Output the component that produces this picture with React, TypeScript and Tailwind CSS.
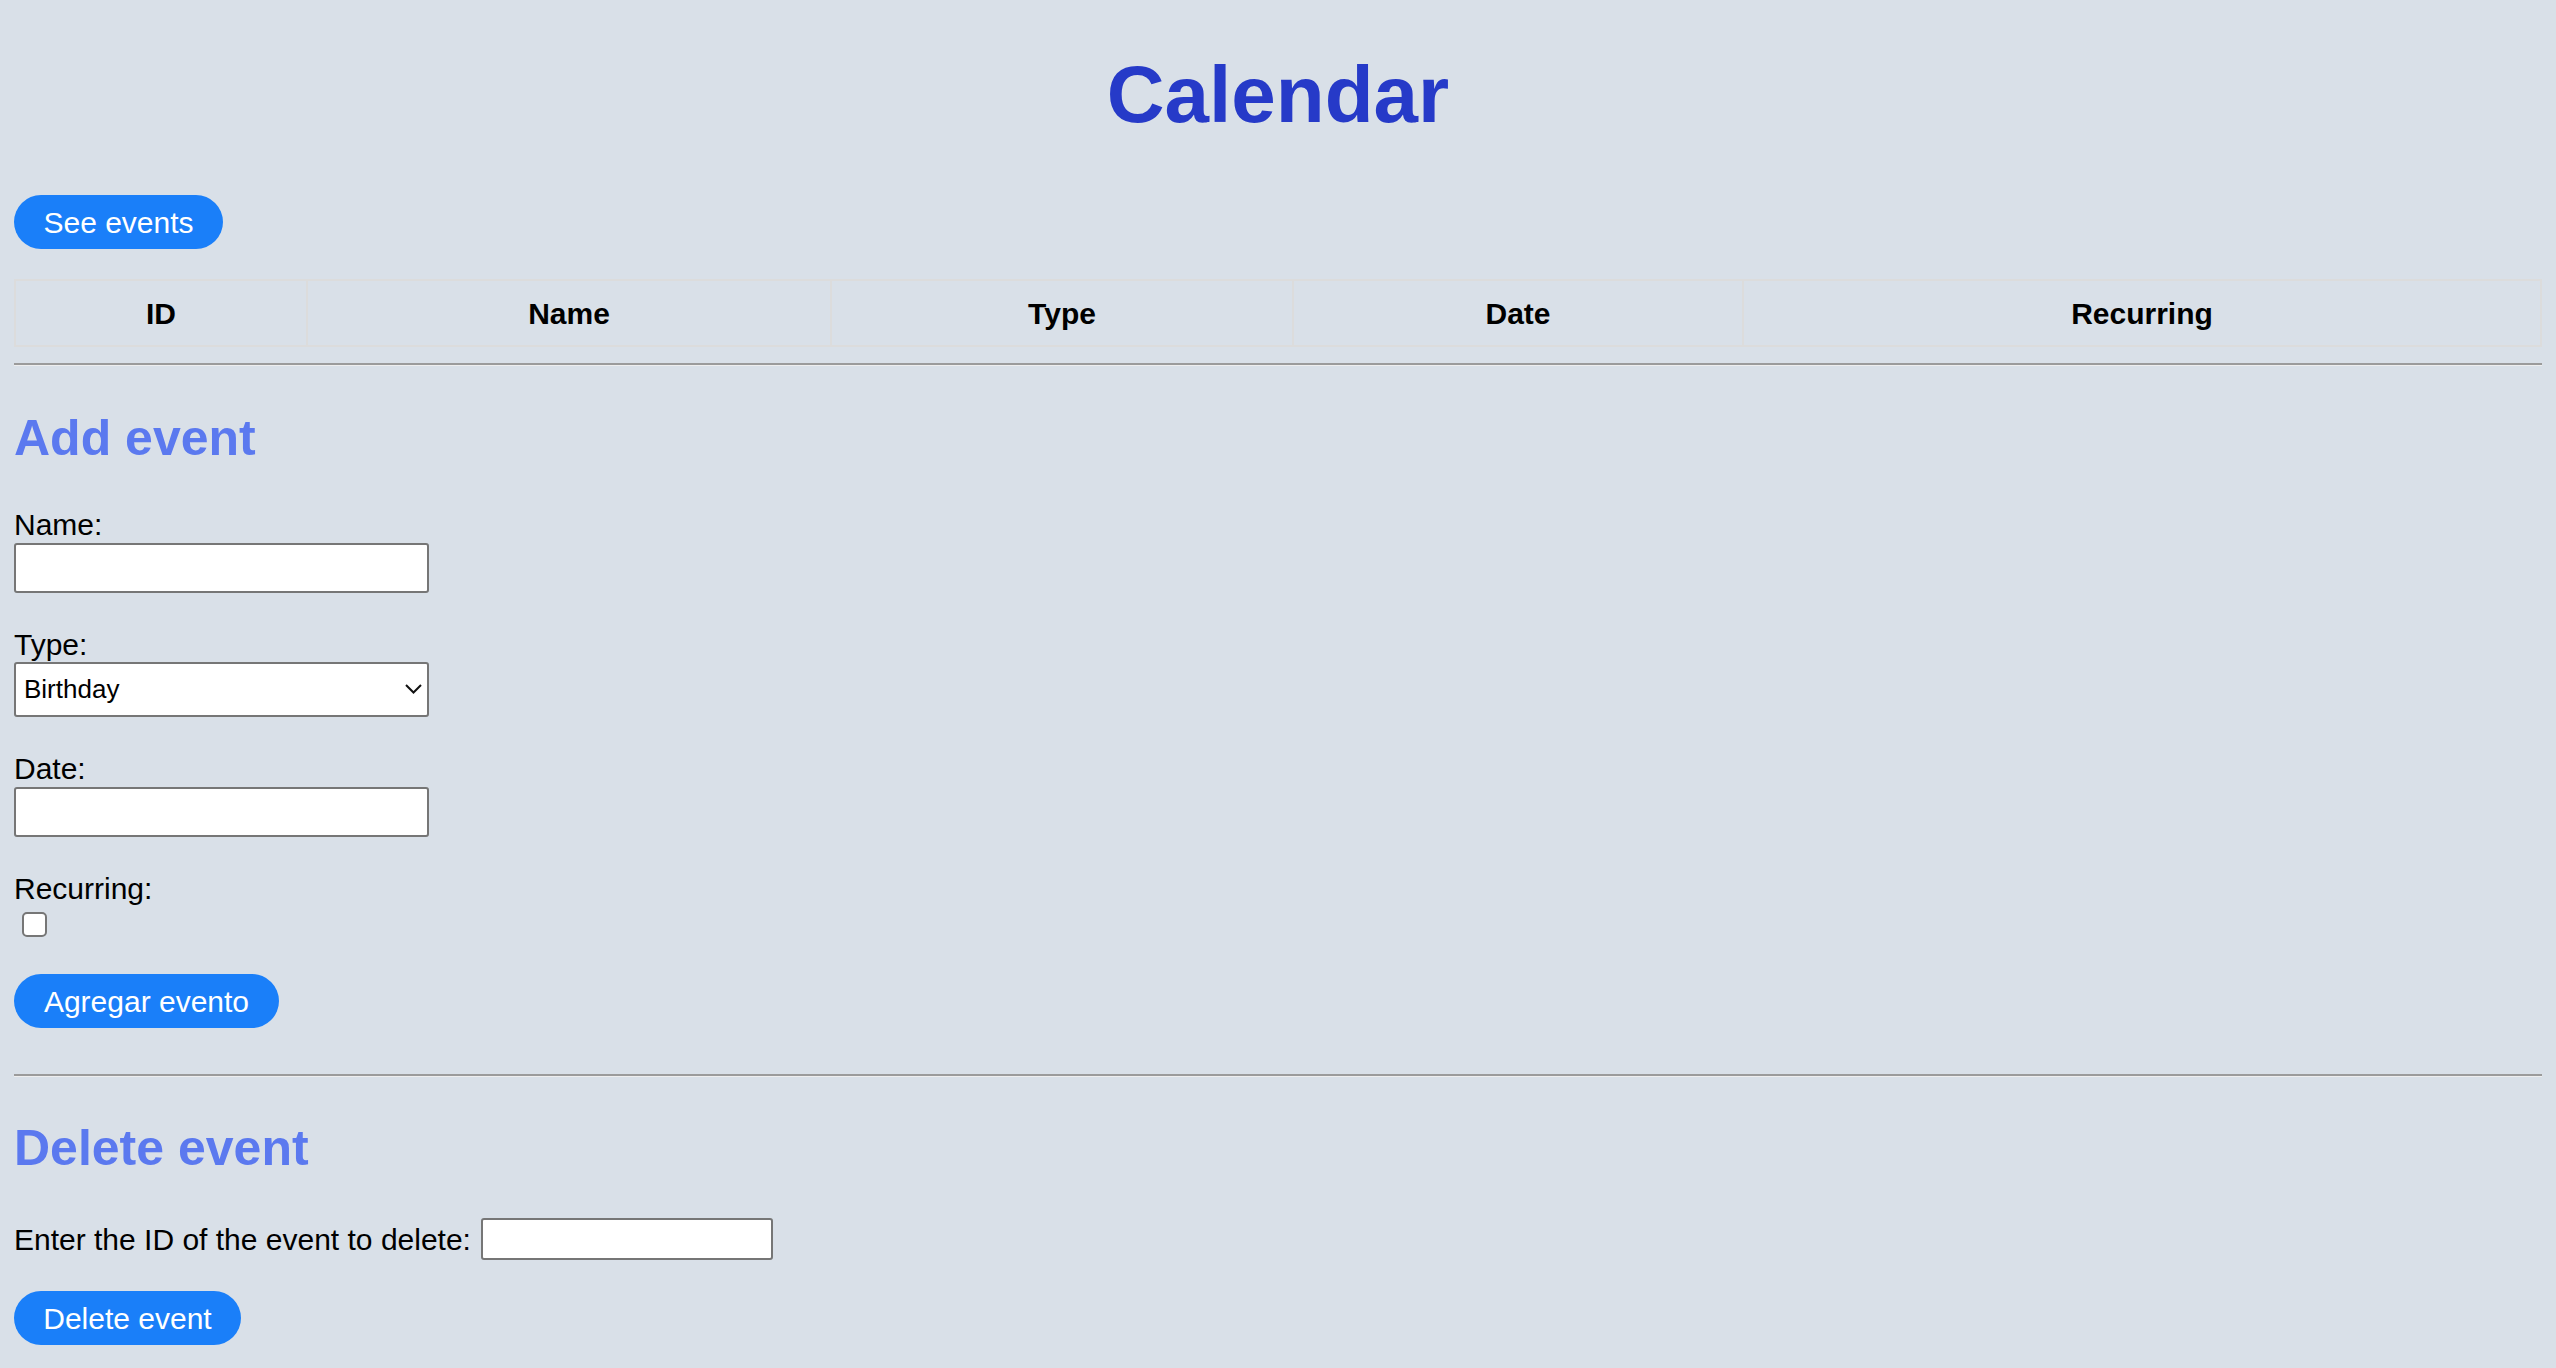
import React from "react";

function Btn({ children, w }: { children: React.ReactNode; w: string }) {
  return (
    <button
      className={`flex h-[54px] items-center justify-center rounded-full bg-[#1a7ff9] text-[30px] leading-[35px] text-white ${w}`}
    >
      {children}
    </button>
  );
}

function Label({ children, mt }: { children: React.ReactNode; mt: string }) {
  return <div className={`text-[30px] leading-[35px] text-black ${mt}`}>{children}</div>;
}

export default function App() {
  const cols = [
    { name: "ID", w: "w-[292px]" },
    { name: "Name", w: "w-[524px]" },
    { name: "Type", w: "w-[462px]" },
    { name: "Date", w: "w-[450px]" },
    { name: "Recurring", w: "" },
  ];
  return (
    <div className="min-h-[1368px] bg-[#d9e0e8] px-[14px] pt-[49px] pb-[23px] font-['Liberation_Sans',Arial,sans-serif] text-black">
      <h1 className="text-center text-[80px] font-bold leading-[92px] text-[#263ac8]">Calendar</h1>

      <div className="mt-[54px]">
        <Btn w="w-[209px]">See events</Btn>
      </div>

      <table className="mt-[30px] w-full border-collapse">
        <thead>
          <tr className="h-[66px]">
            {cols.map((c) => (
              <th
                key={c.name}
                className={`border-2 border-[#dcdcdc] p-0 text-center align-middle text-[30px] font-bold leading-[35px] ${c.w}`}
              >
                {c.name}
              </th>
            ))}
          </tr>
        </thead>
      </table>

      <div className="mt-[16px] h-[3px] border-t-2 border-b border-t-[#9b9b9b] border-b-[#eeeeee]" />

      <h2 className="mt-[43px] text-[50px] font-bold leading-[58px] text-[#5b79ef]">Add event</h2>

      <Label mt="mt-[40px]">Name:</Label>
      <input
        type="text"
        className="mt-[1px] block h-[50px] w-[415px] rounded-[3px] border-2 border-[#767676] bg-white"
      />

      <Label mt="mt-[34px]">Type:</Label>
      <div className="relative w-[415px]">
        <select className="block h-[55px] w-[415px] appearance-none rounded-[3px] border-2 border-[#767676] bg-white pl-[8px] text-[26px] text-black">
          <option>Birthday</option>
        </select>
        <svg
          className="pointer-events-none absolute left-[391px] top-[22px]"
          width="17"
          height="10"
          viewBox="0 0 17 10"
        >
          <path d="M1 1 L8.5 8.5 L16 1" fill="none" stroke="#111" strokeWidth="2" />
        </svg>
      </div>

      <Label mt="mt-[34px]">Date:</Label>
      <input
        type="text"
        className="mt-[1px] block h-[50px] w-[415px] rounded-[3px] border-2 border-[#767676] bg-white"
      />

      <Label mt="mt-[34px]">Recurring:</Label>
      <input
        type="checkbox"
        className="ml-[8px] mt-[6px] block h-[25px] w-[25px] appearance-none rounded-[5px] border-[2.5px] border-[#767676] bg-white"
      />

      <div className="mt-[37px]">
        <Btn w="w-[265px]">Agregar evento</Btn>
      </div>

      <div className="mt-[46px] h-[3px] border-t-2 border-b border-t-[#9b9b9b] border-b-[#eeeeee]" />

      <h2 className="mt-[42px] text-[50px] font-bold leading-[58px] text-[#5b79ef]">Delete event</h2>

      <div className="mt-[41px] flex h-[42px] items-center gap-[10px]">
        <span className="text-[30px] leading-[35px]">Enter the ID of the event to delete:</span>
        <input
          type="text"
          className="block h-[42px] w-[292px] rounded-[3px] border-2 border-[#767676] bg-white"
        />
      </div>

      <div className="mt-[31px]">
        <Btn w="w-[227px]">Delete event</Btn>
      </div>
    </div>
  );
}
